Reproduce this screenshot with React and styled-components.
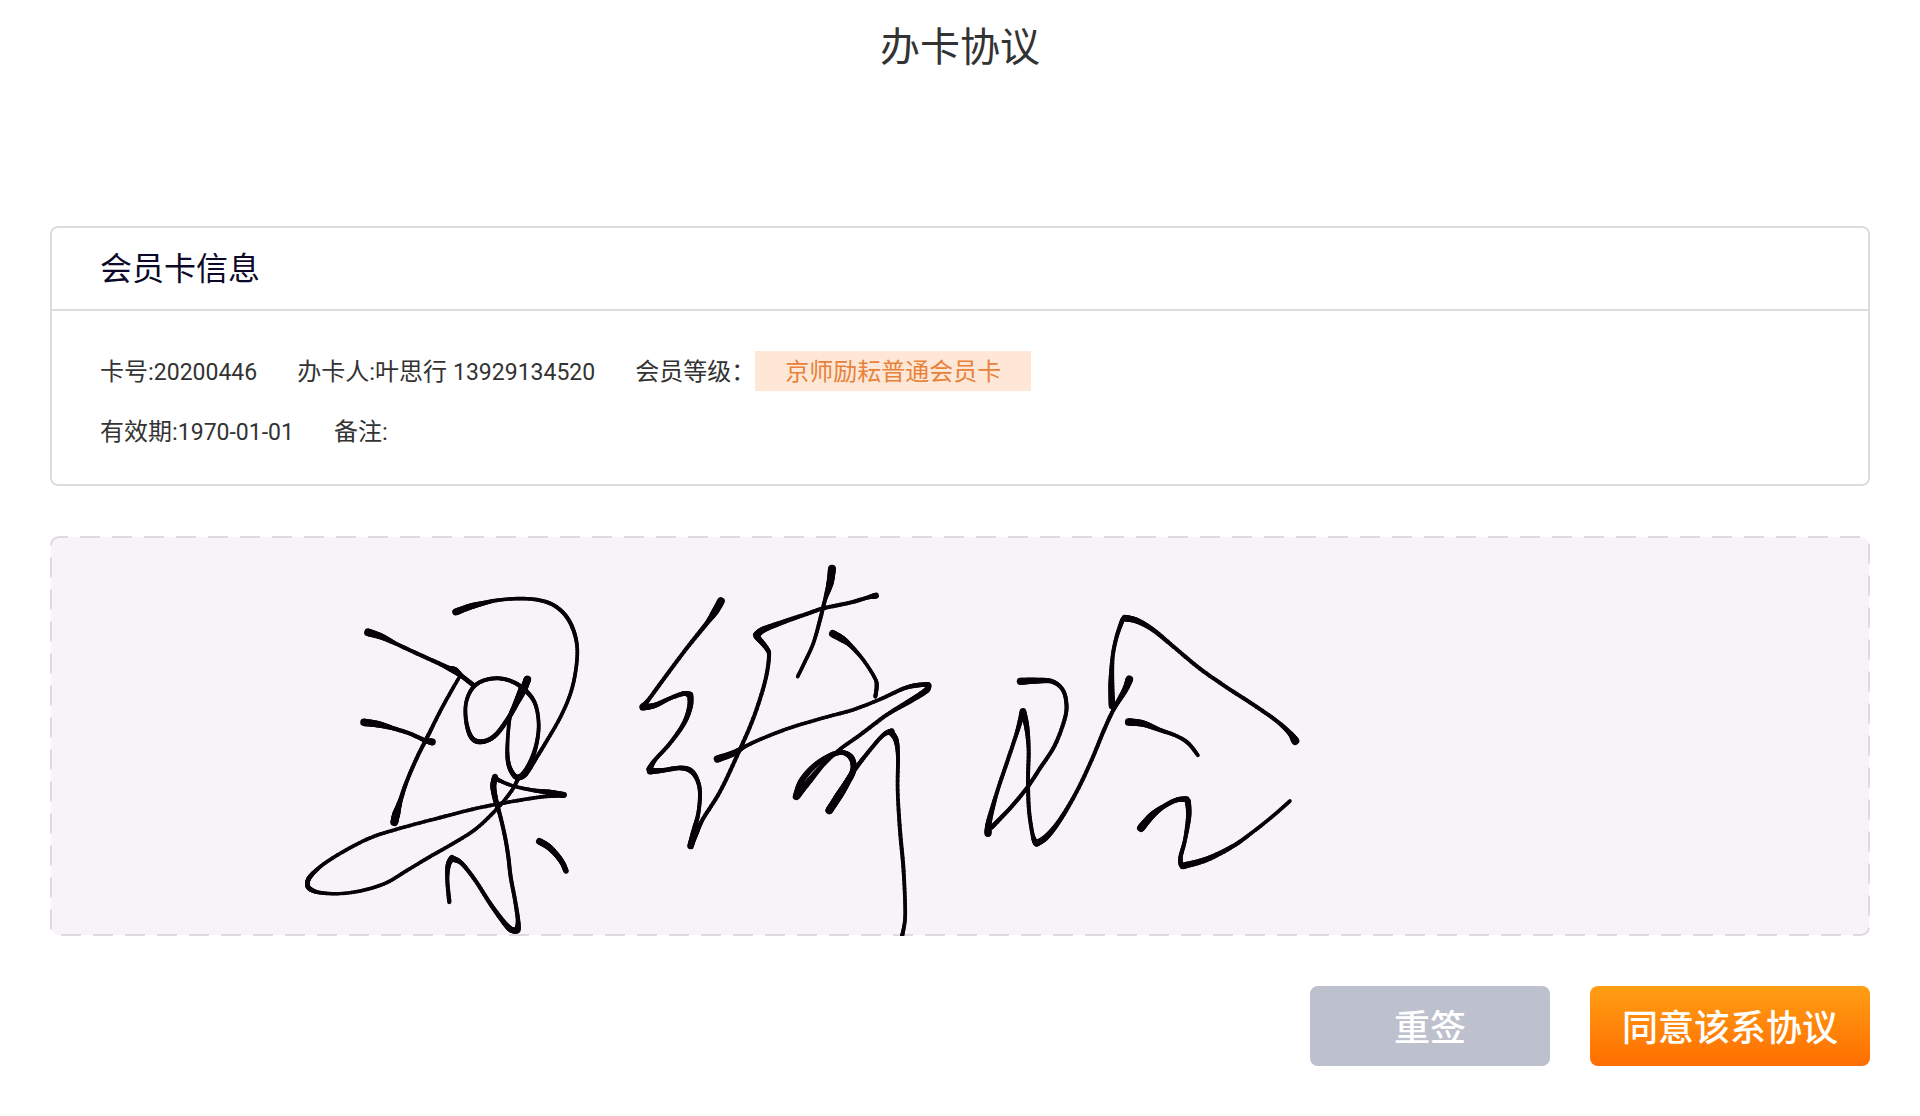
import React from "react"
import styled, { createGlobalStyle } from "styled-components"

const colors = {
  text: "#333333",
  heading: "#0b0828",
  line: "#dcdcdf",
  pad: "#f7f3f8",
  tagBg: "#fee7d6",
  tagText: "#e8823a",
  grey: "#bdc1ce",
  white: "#ffffff",
}

// Each pen stroke is a list of [x, y, pen width]
const LIANG = [
  [[234, 187, 24], [275, 200, 19], [320, 222, 12], [380, 250, 12], [440, 277, 12], [475, 294, 14], [495, 302, 21], [515, 318, 14], [550, 345, 14]],
  [[510, 318, 10], [480, 370, 11], [450, 425, 11], [415, 495, 12], [380, 565, 12], [350, 635, 12], [330, 695, 14], [318, 735, 24], [313, 757, 23]],
  [[222, 457, 23], [265, 463, 20], [310, 475, 13], [360, 491, 12], [405, 511, 13], [427, 516, 21]],
  [[497, 126, 21], [540, 110, 19], [575, 101, 15], [620, 91, 11], [680, 86, 11], [740, 89, 11], [790, 105, 12], [828, 138, 12], [852, 185, 12], [862, 240, 11], [856, 310, 11], [840, 375, 11], [812, 440, 11], [775, 505, 11], [738, 565, 12], [705, 612, 18], [685, 625, 14]],
  [[685, 625, 12], [665, 662, 11], [625, 712, 11], [560, 775, 11], [490, 820, 11], [420, 860, 11], [350, 902, 11], [290, 938, 11], [220, 961, 11], [150, 971, 10], [90, 968, 11], [60, 957, 14], [52, 941, 14], [62, 918, 14], [100, 883, 11], [160, 845, 11], [240, 804, 11], [330, 775, 11], [450, 743, 11], [560, 715, 11], [670, 694, 11], [760, 680, 11], [822, 675, 16]],
  [[822, 675, 18], [780, 667, 16], [730, 661, 12], [670, 648, 10], [625, 630, 12], [615, 620, 16]],
  [[615, 622, 18], [610, 650, 18], [618, 695, 16], [630, 735, 12], [645, 800, 12], [655, 860, 12], [662, 920, 12], [675, 990, 12], [684, 1050, 13], [683, 1080, 18]],
  [[680, 1082, 18], [662, 1078, 18], [640, 1055, 15], [600, 1000, 13], [555, 930, 12], [515, 880, 13], [488, 866, 18]],
  [[486, 864, 18], [475, 885, 16], [472, 930, 12], [478, 996, 13]],
  [[748, 814, 20], [775, 830, 19], [800, 855, 17], [818, 880, 16], [828, 903, 16]],
  [[712, 328, 23], [700, 360, 22], [680, 400, 16], [655, 445, 14], [620, 492, 14], [590, 512, 14], [560, 514, 15], [540, 495, 14], [528, 450, 12], [528, 400, 11], [545, 358, 12], [575, 334, 12], [620, 325, 12], [665, 334, 12], [705, 360, 14], [735, 400, 12], [746, 460, 11], [740, 520, 12], [722, 575, 14], [700, 612, 16], [680, 622, 16], [662, 600, 14], [653, 565, 13], [653, 510, 11], [660, 440, 11], [672, 405, 10], [695, 350, 14]],
]

const QI = [
  [[303, 183, 23], [285, 215, 22], [260, 250, 14], [200, 325, 12], [140, 405, 12], [85, 480, 12], [68, 500, 18]],
  [[68, 502, 20], [105, 496, 16], [150, 475, 12], [190, 461, 14], [210, 464, 18]],
  [[211, 465, 18], [210, 500, 17], [192, 550, 14], [150, 610, 12], [105, 660, 12], [88, 688, 18]],
  [[90, 694, 20], [130, 691, 14], [180, 684, 14], [212, 692, 16], [232, 720, 13], [240, 760, 12], [235, 820, 12], [222, 870, 14], [212, 918, 20]],
  [[212, 918, 18], [228, 880, 16], [250, 835, 12], [300, 755, 12], [350, 650, 12], [400, 535, 12], [435, 425, 12], [447, 350, 12], [440, 325, 14], [410, 290, 18]],
  [[410, 285, 22], [430, 269, 19], [490, 246, 14], [560, 222, 12], [610, 205, 12], [690, 188, 12], [745, 172, 12], [768, 167, 18]],
  [[636, 86, 24], [630, 130, 22], [615, 180, 12], [600, 240, 12], [580, 310, 11], [555, 365, 11], [533, 410, 11]],
  [[638, 281, 22], [665, 296, 21], [690, 315, 14], [730, 360, 11], [765, 415, 11], [770, 440, 12], [766, 470, 12]],
  [[292, 657, 22], [340, 640, 19], [380, 617, 11], [440, 590, 11], [520, 560, 11], [620, 531, 11], [700, 509, 11], [780, 478, 11], [850, 446, 12], [890, 436, 14], [925, 433, 14]],
  [[926, 436, 16], [918, 452, 18], [870, 483, 16], [800, 525, 12], [720, 585, 12], [660, 628, 11], [610, 674, 12], [570, 720, 18], [530, 770, 20]],
  [[528, 770, 20], [545, 722, 18], [585, 676, 16], [635, 645, 16], [670, 638, 14], [695, 655, 18], [700, 690, 18], [680, 730, 20], [655, 770, 24], [628, 811, 23]],
  [[628, 811, 22], [660, 760, 22], [700, 695, 14], [750, 630, 12], [790, 585, 12], [815, 574, 18]],
  [[812, 576, 18], [828, 600, 16], [834, 650, 12], [833, 750, 11], [840, 870, 12], [850, 980, 12], [855, 1080, 11], [855, 1140, 11], [846, 1190, 12]],
]

const LING = [
  [[181, 274, 22], [230, 272, 18], [275, 274, 14], [305, 295, 12], [318, 330, 12], [316, 380, 12], [285, 465, 12], [240, 535, 12], [200, 595, 12], [150, 655, 12], [95, 712, 14]],
  [[84, 730, 22], [87, 695, 18], [110, 610, 12], [140, 520, 12], [170, 430, 12], [188, 365, 18]],
  [[189, 364, 20], [200, 410, 16], [206, 480, 12], [204, 570, 12], [207, 660, 12], [218, 735, 12], [228, 760, 18]],
  [[230, 760, 20], [260, 740, 18], [300, 690, 14], [350, 605, 12], [395, 510, 12], [430, 425, 12], [460, 360, 12], [495, 300, 18], [508, 268, 23]],
  [[456, 348, 20], [454, 280, 18], [458, 200, 12], [470, 140, 12], [488, 88, 14]],
  [[494, 84, 20], [530, 92, 18], [580, 120, 14], [650, 178, 12], [720, 236, 12], [800, 292, 12], [880, 344, 12], [950, 393, 12], [990, 430, 15], [1006, 453, 24]],
  [[506, 396, 23], [550, 401, 20], [600, 420, 13], [650, 438, 11], [685, 460, 12], [714, 496, 11]],
  [[543, 714, 24], [575, 677, 21], [610, 650, 14], [650, 630, 14], [680, 628, 18]],
  [[684, 634, 18], [686, 680, 16], [675, 750, 12], [662, 800, 13], [663, 825, 14]],
  [[668, 828, 20], [740, 808, 17], [820, 768, 13], [880, 725, 11], [940, 677, 11], [990, 633, 11]],
]

const signature = [
  { name: "liang", x: 240, y: 34, strokes: LIANG },
  { name: "qi", x: 570, y: 4, strokes: QI },
  { name: "ling", x: 910, y: 54, strokes: LING },
]

const STEPS = 8

// Catmull-Rom through the recorded points, pen width eased linearly
const smooth = points => {
  const out = []
  for (let i = 0; i < points.length - 1; i++) {
    const p0 = points[i - 1] || points[i]
    const p1 = points[i]
    const p2 = points[i + 1]
    const p3 = points[i + 2] || p2
    for (let s = 0; s < STEPS; s++) {
      const t = s / STEPS
      const at = k =>
        0.5 *
        (2 * p1[k] +
          (p2[k] - p0[k]) * t +
          (2 * p0[k] - 5 * p1[k] + 4 * p2[k] - p3[k]) * t * t +
          (3 * p1[k] - p0[k] - 3 * p2[k] + p3[k]) * t * t * t)
      out.push([at(0), at(1), p1[2] + (p2[2] - p1[2]) * t])
    }
  }
  out.push(points[points.length - 1])
  return out
}

const Stroke = ({ points }) => {
  const line = smooth(points)
  return line.slice(1).map((p, i) => (
    <line
      key={i}
      x1={line[i][0]}
      y1={line[i][1]}
      x2={p[0]}
      y2={p[1]}
      strokeWidth={p[2]}
    />
  ))
}

const SignaturePad = () => (
  <Pad role="img" aria-label="签名">
    <rect className="frame" x="1" y="1" rx="8" />
    {signature.map(({ name, x, y, strokes }) => (
      <g
        key={name}
        className="ink"
        transform={`translate(${x} ${y}) scale(0.3333)`}
      >
        {strokes.map((points, i) => (
          <Stroke key={i} points={points} />
        ))}
      </g>
    ))}
  </Pad>
)

const App = () => (
  <>
    <GlobalStyle />
    <Page>
      <Title>办卡协议</Title>
      <Card>
        <CardHeader>会员卡信息</CardHeader>
        <CardBody>
          <Row>
            <Field>
              卡号:<Digits>20200446</Digits>
            </Field>
            <Field>
              办卡人:叶思行 <Digits>13929134520</Digits>
            </Field>
            <Level>
              <Field>会员等级：</Field>
              <Tag>京师励耘普通会员卡</Tag>
            </Level>
          </Row>
          <Row>
            <Field>
              有效期:<Digits>1970-01-01</Digits>
            </Field>
            <Field>备注:</Field>
          </Row>
        </CardBody>
      </Card>
      <SignaturePad />
      <Actions>
        <Button type="button">重签</Button>
        <Button type="button" $primary>
          同意该系协议
        </Button>
      </Actions>
    </Page>
  </>
)

const GlobalStyle = createGlobalStyle`
  * {
    box-sizing: border-box;
  }

  body {
    margin: 0;
    background-color: ${colors.white};
    color: ${colors.text};
    font-family: Roboto, "Noto Sans CJK SC", sans-serif;
  }
`

const Page = styled.main`
  display: flex;
  flex-direction: column;
  padding: 0 50px 50px;
`

const Title = styled.h1`
  margin: 0 0 131px;
  font-size: 40px;
  font-weight: 400;
  line-height: 95px;
  text-align: center;
`

const Card = styled.section`
  margin-bottom: 50px;
  border: 2px solid ${colors.line};
  border-radius: 8px;
`

const CardHeader = styled.h2`
  margin: 0;
  padding: 2px 48px 0;
  border-bottom: 2px solid ${colors.line};
  color: ${colors.heading};
  font-size: 32px;
  font-weight: 400;
  line-height: 79px;
`

const CardBody = styled.div`
  display: flex;
  flex-direction: column;
  gap: 20px;
  padding: 40px 48px 33px;
  font-size: 24px;
  line-height: 38px;
`

const Row = styled.div`
  display: flex;
  flex-wrap: wrap;
  column-gap: 40px;
`

const Field = styled.span`
  padding-top: 2px;
`

const Digits = styled.span`
  font-size: 23px;
  line-height: 1;
`

const Level = styled.div`
  display: flex;
`

const Tag = styled.span`
  padding: 2px 30px 0;
  background-color: ${colors.tagBg};
  color: ${colors.tagText};
`

const Pad = styled.svg`
  display: block;
  width: 100%;
  height: 400px;
  overflow: hidden;

  .frame {
    width: calc(100% - 2px);
    height: calc(100% - 2px);
    fill: ${colors.pad};
    stroke: ${colors.line};
    stroke-width: 2px;
    stroke-dasharray: 20 12;
    stroke-dashoffset: 11px;
  }

  .ink {
    stroke: #050308;
    stroke-linecap: round;
  }
`

const Actions = styled.div`
  display: flex;
  justify-content: flex-end;
  gap: 40px;
  margin-top: 50px;
`

const Button = styled.button`
  width: ${({ $primary }) => ($primary ? "280px" : "240px")};
  height: 80px;
  padding: 0 0 2px;
  border: none;
  border-radius: 8px;
  background: ${({ $primary }) =>
    $primary ? "linear-gradient(#ff9e14, #ff6e00)" : colors.grey};
  color: ${colors.white};
  font-family: inherit;
  font-size: 36px;
  font-weight: 500;
  cursor: pointer;
`

export default App
